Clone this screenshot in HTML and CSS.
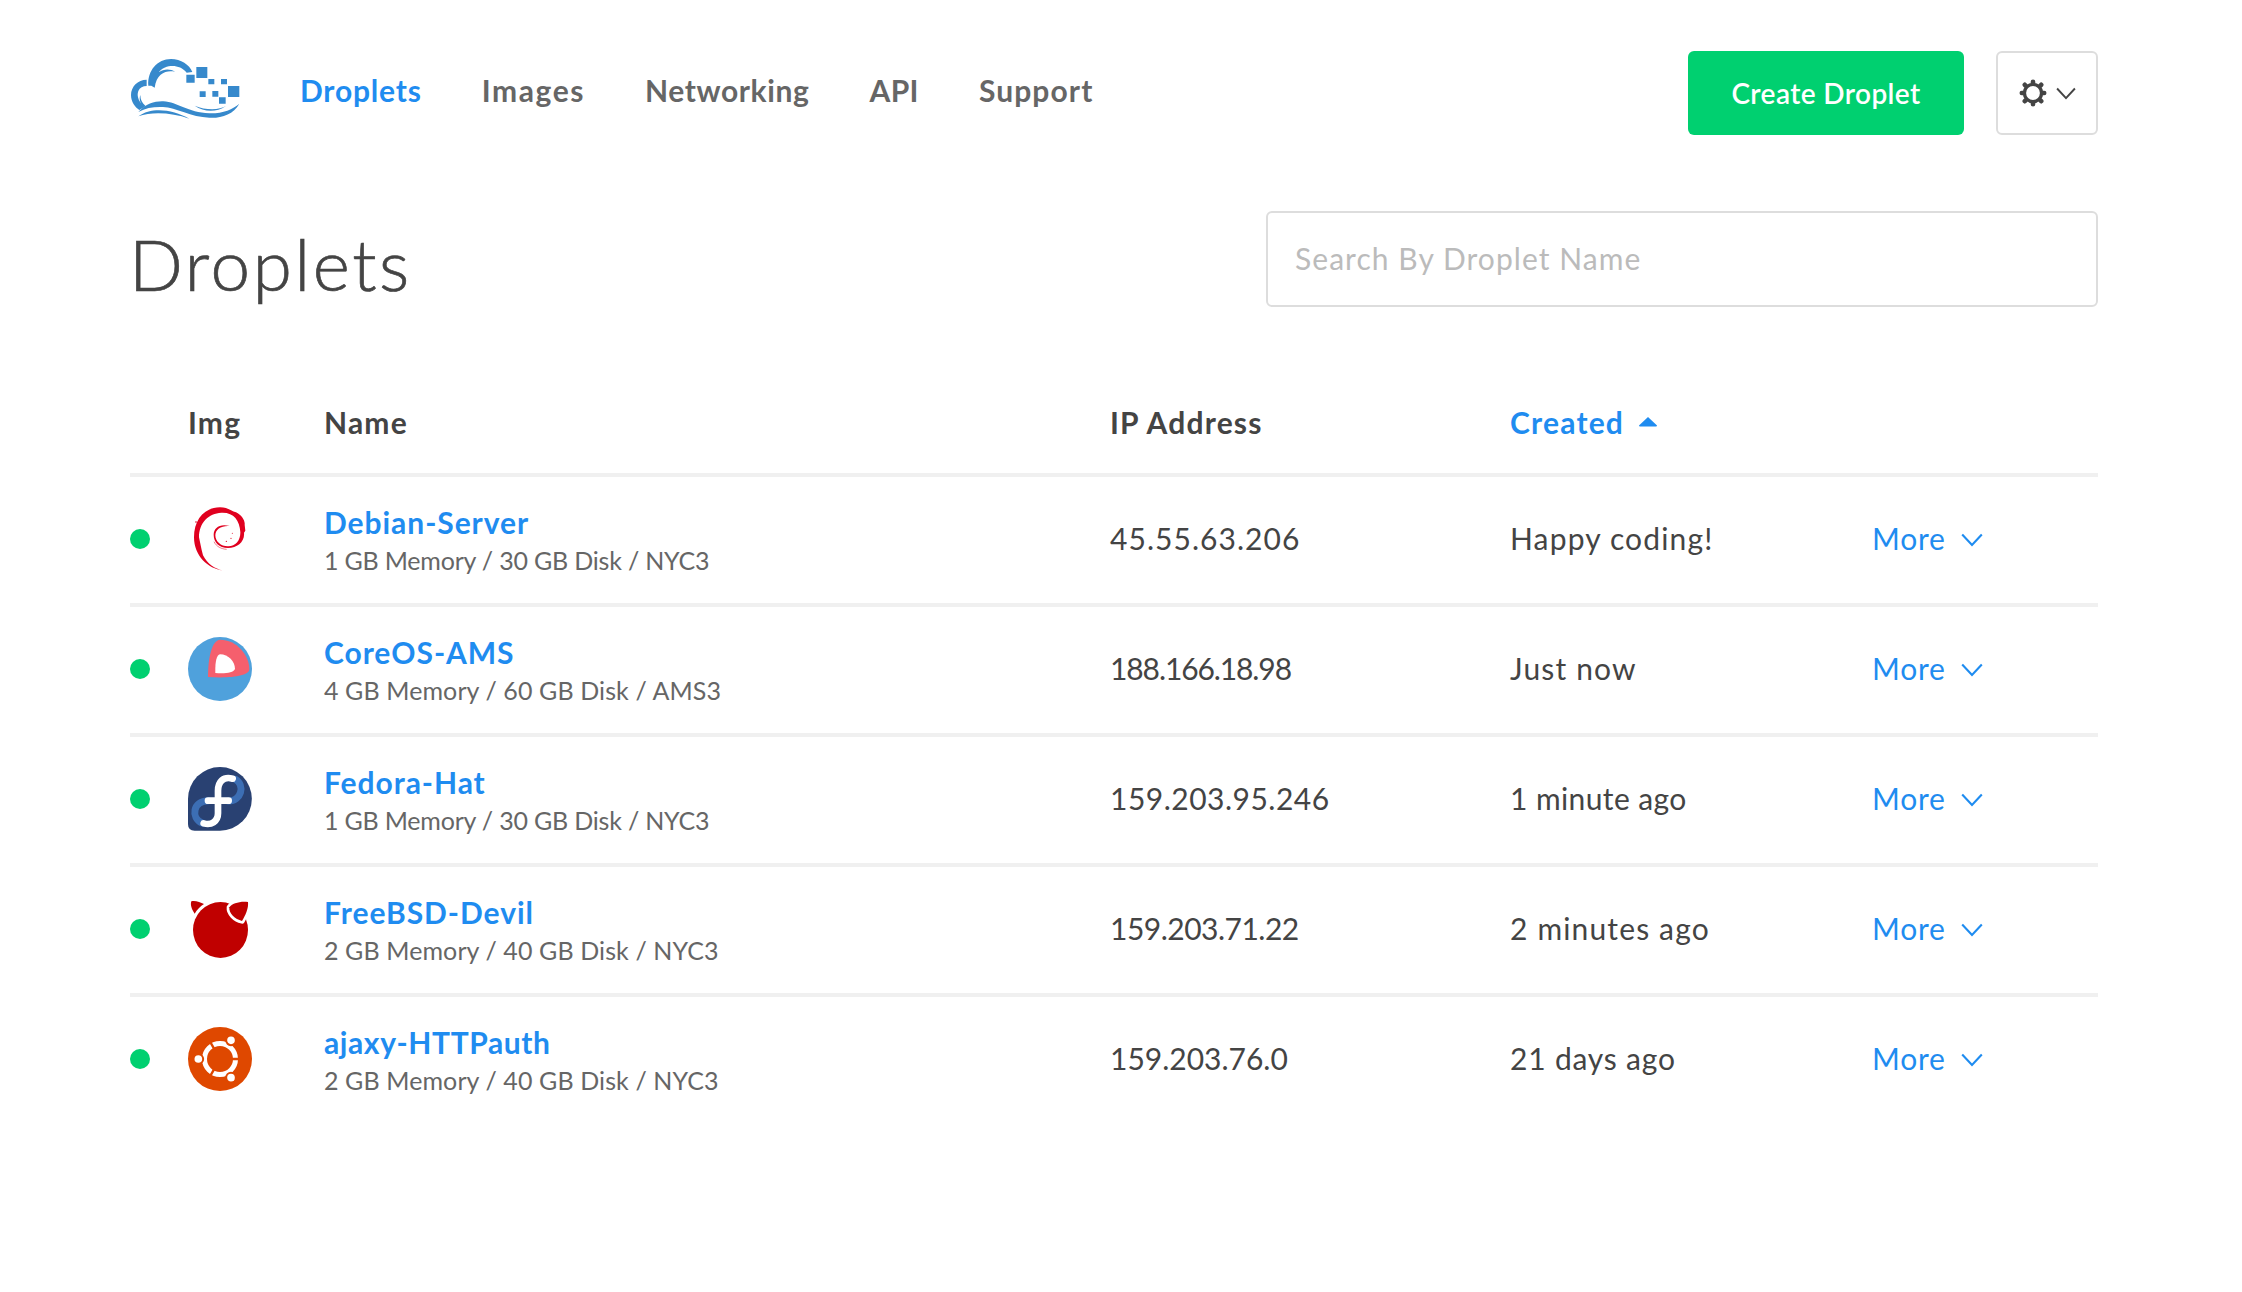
FILE: index.html
```
<!DOCTYPE html>
<html lang="en">
<head>
<meta charset="utf-8">
<title>Droplets</title>
<link rel="stylesheet" href="styles.css">
</head>
<body>
<svg class="sprite" aria-hidden="true">
  <symbol id="chevron" viewBox="0 0 22 14"><path d="M1.2 1.5 11 12 20.8 1.5" fill="none" stroke="currentColor" stroke-width="2.1"/></symbol>
</svg>
<div class="page">
  <header class="topbar">
    <a class="logo" href="#" aria-label="Home">
      <svg viewBox="0 0 360 210" fill="#3689cc">
        <path d="M67 95C64 50 94 15 135 15C165 15 190 32 199 54L182 56C168 38 146 33 128 37C112 41 101 50 99 55C113 44 134 45 147 53C122 48 92 56 86 101L76 95Z"/>
        <path d="M62 77C35 77 15 98 15 123C15 143 27 160 40 168L56 158C39 146 31 126 37 111C41 101 51 96 62 96Z"/>
        <path d="M43 123C38 136 44 152 54 160L58 155C48 147 43 137 43 123Z"/>
        <path d="M37 174C60 148 88 141 112 142C155 144 185 176 250 178C290 179 320 166 340 149C322 182 285 193 250 191C195 190 150 160 111 159C84 158 60 161 37 174Z"/>
        <path d="M37 187C75 158 140 165 190 194C140 177 80 172 37 187Z"/>
        <path d="M206 155C235 175 270 176 300 156C282 168 240 170 206 155Z"/>
        <path d="M181 62h25v24h-25zM211 39h33v33h-33zM247 75h18v16h-18zM285 75h18v16h-18zM306 96h34v33h-34zM221 112h18v17h-18zM259 111h18v17h-18zM279 130h20v19h-20z"/>
      </svg>
    </a>
    <nav class="nav">
      <a class="nav-link active" href="#">Droplets</a>
      <a class="nav-link" href="#">Images</a>
      <a class="nav-link" href="#">Networking</a>
      <a class="nav-link" href="#">API</a>
      <a class="nav-link" href="#">Support</a>
    </nav>
    <div class="actions">
      <button class="create" type="button">Create Droplet</button>
      <button class="settings" type="button" aria-label="Settings">
        <svg class="gear" viewBox="-14 -14 28 28">
          <circle r="8.6" fill="none" stroke="#444" stroke-width="3.4"/>
          <path d="M0-11.2V-9.500M0 11.200V9.500M-11.200 0H-9.500M11.200 0H9.500M-8.200-8.200l1 1M8.200-8.200l-1 1M-8.200 8.200l1-1M8.200 8.200l-1-1" stroke="#444" stroke-width="4.600" stroke-linecap="round"/>
        </svg>
        <svg class="chev-sm"><use href="#chevron"/></svg>
      </button>
    </div>
  </header>

  <div class="heading">
    <h1>Droplets</h1>
    <input class="search" type="text" placeholder="Search By Droplet Name">
  </div>

  <div class="table">
    <div class="row head">
      <span></span><span>Img</span><span>Name</span><span>IP Address</span>
      <span class="sorted">Created <svg class="caret" viewBox="0 0 20 10"><path d="M10 0 19 8.500Q19 9.500 18 9.500H2Q1 9.500 1 8.500Z" fill="currentColor"/></svg></span>
      <span></span>
    </div>

    <div class="row">
      <i class="dot"></i>
      <svg class="os" viewBox="12 21 192 192" fill="#e0001f">
        <path d="M117 212C72 206 30 168 30 112C30 60 60 22 108 22C132 22 142 34 156 37C172 44 184 62 182 74L184 92L180 98C183 125 160 144 132 144C105 144 89 126 89 104C89 83 108 70 137 78C112 76 94 88 94 106C94 125 112 140 133 139C155 139 170 120 169 96C167 60 148 36 112 38C74 40 45 68 45 112L53 150L57 166C70 192 92 206 117 212Z"/>
        <path d="M90 125C97 140 112 147 128 148" fill="none" stroke="#e0001f" stroke-width="1.500"/>
        <circle cx="145" cy="100" r="1.500"/><circle cx="141" cy="115" r="1.800"/><circle cx="127" cy="124" r="2"/><circle cx="36" cy="66" r="2.500"/>
      </svg>
      <div class="who"><a class="name" href="#">Debian-Server</a><span class="spec">1 GB Memory / 30 GB Disk / NYC3</span></div>
      <span class="ip ip-wide">45.55.63.206</span>
      <span class="created">Happy coding!</span>
      <a class="more" href="#">More <svg class="chev"><use href="#chevron"/></svg></a>
    </div>

    <div class="row">
      <i class="dot"></i>
      <svg class="os" viewBox="204 111 192 192">
        <circle cx="300" cy="207" r="96" fill="#4fa1dc"/>
        <path d="M264 231C264 170 276 121 300 119C350 119 388 165 388 208C388 228 330 236 264 231Z" fill="#f55f6d"/>
        <path d="M286 219C285 185 290 165 300 163C325 163 345 185 345 207C340 218 315 222 286 219Z" fill="#fff"/>
      </svg>
      <div class="who"><a class="name" href="#">CoreOS-AMS</a><span class="spec spec-wide">4 GB Memory / 60 GB Disk / AMS3</span></div>
      <span class="ip ip-tight">188.166.18.98</span>
      <span class="created">Just now</span>
      <a class="more" href="#">More <svg class="chev"><use href="#chevron"/></svg></a>
    </div>

    <div class="row">
      <i class="dot"></i>
      <svg class="os" viewBox="204 501 192 192" fill="none" stroke-linecap="round">
        <path d="M300 501A95.500 95.500 0 0 1 300 692H224Q204 692 204 672V597A96 96 0 0 1 300 501Z" fill="#294172"/>
        <path d="M346 538C376 556 364 603 325 603M265 602C218 602 212 654 246 669" stroke="#3c6eb4" stroke-width="21"/>
        <path d="M338 536C309 528 294 546 294 572V640C294 664 274 677 251 670M264 602H326" stroke="#fff" stroke-width="20"/>
      </svg>
      <div class="who"><a class="name" href="#">Fedora-Hat</a><span class="spec">1 GB Memory / 30 GB Disk / NYC3</span></div>
      <span class="ip ip-normal">159.203.95.246</span>
      <span class="created created-tight">1 minute ago</span>
      <a class="more" href="#">More <svg class="chev"><use href="#chevron"/></svg></a>
    </div>

    <div class="row">
      <i class="dot"></i>
      <svg class="os" viewBox="204 111 192 192" fill="#c00000">
        <path d="M214 124C226 121 241 127 252 132C240 140 230 150 224 161C216 149 210 135 214 124Z"/>
        <ellipse cx="301.500" cy="210" rx="82.500" ry="84"/>
        <path d="M328 142C326 160 345 178 366 183C377 165 386 144 384 126C365 122 335 129 328 142Z" stroke="#fff" stroke-width="16" stroke-linejoin="round" paint-order="stroke"/>
      </svg>
      <div class="who"><a class="name" href="#">FreeBSD-Devil</a><span class="spec spec-wide">2 GB Memory / 40 GB Disk / NYC3</span></div>
      <span class="ip ip-snug">159.203.71.22</span>
      <span class="created">2 minutes ago</span>
      <a class="more" href="#">More <svg class="chev"><use href="#chevron"/></svg></a>
    </div>

    <div class="row">
      <i class="dot"></i>
      <svg class="os" viewBox="-96 -96 192 192">
        <circle r="96" fill="#df4800"/>
        <circle r="46.500" fill="none" stroke="#fff" stroke-width="15"/>
        <path d="M30 0H60M-17-29.400-30-52M-17 29.400-30 52" stroke="#df4800" stroke-width="7"/>
        <g fill="#fff" stroke="#df4800" stroke-width="6"><circle cx="-65" r="14.500"/><circle cx="33" cy="-56" r="14.500"/><circle cx="33" cy="56" r="14.500"/></g>
      </svg>
      <div class="who"><a class="name name-tight" href="#">ajaxy-HTTPauth</a><span class="spec spec-wide">2 GB Memory / 40 GB Disk / NYC3</span></div>
      <span class="ip ip-even">159.203.76.0</span>
      <span class="created created-snug">21 days ago</span>
      <a class="more" href="#">More <svg class="chev"><use href="#chevron"/></svg></a>
    </div>
  </div>
</div>
</body>
</html>
```
FILE: styles.css
```
* { box-sizing: border-box; }
body { margin: 0; background: #fff; color: #444; font: 400 30px/40px Lato, sans-serif; }
a { color: #1f8cf0; text-decoration: none; }
button, input { font: inherit; }
.sprite { display: block; width: 0; height: 0; }
.page { width: 1968px; margin: 0 0 0 130px; padding-top: 51px; }

.topbar { display: flex; align-items: flex-start; height: 84px; }
.logo { width: 120px; height: 70px; margin: 3px 0 0 -4px; }
.logo svg { display: block; width: 120px; height: 70px; }
.nav { display: flex; gap: 60px; margin: 19px 0 0 54px; }
.nav-link { color: #666; font-weight: 700; letter-spacing: .8px; }
.nav-link.active { color: #1f8cf0; }
.nav-link:nth-child(2) { letter-spacing: 1.6px; }
.nav-link:nth-child(3) { letter-spacing: .6px; }
.nav-link:nth-child(4) { letter-spacing: .4px; }
.nav-link:nth-child(5) { letter-spacing: 1.1px; }
.actions { display: flex; gap: 32px; margin-left: auto; }
.create { width: 276px; height: 84px; padding: 0; border: 0; border-radius: 6px; background: #00d070; color: #fff; font-size: 28px; font-weight: 600; letter-spacing: .4px; }
.settings { display: flex; align-items: center; justify-content: center; gap: 9px; width: 102px; height: 84px; padding: 0 0 0 1px; border: 2px solid #ddd; border-radius: 6px; background: #fff; color: #444; }
.gear { width: 28px; height: 28px; }
.chev-sm { width: 20px; height: 13px; }

.heading { display: flex; justify-content: space-between; align-items: flex-start; height: 96px; margin-top: 76px; }
h1 { margin: 13px 0 0 -1px; font-size: 71px; line-height: 80px; font-weight: 300; letter-spacing: 2.6px; -webkit-text-stroke: .7px #444; }
.search { width: 832px; height: 96px; padding: 0 27px 2px; border: 2px solid #ddd; border-radius: 6px; background: #fff; color: #444; letter-spacing: 1.05px; outline: 0; }
.search::placeholder { color: #bbb; opacity: 1; }

.table { margin-top: 92px; }
.row { display: grid; grid-template-columns: 58px 136px 786px 400px 362px 1fr; align-items: center; height: 130px; padding-bottom: 2px; border-top: 4px solid #f0f0f0; }
.row.head { height: 74px; align-items: start; padding-top: 3px; border-top: 0; font-weight: 700; letter-spacing: 1.2px; }
.sorted { display: flex; align-items: center; gap: 14px; color: #1f8cf0; }
.caret { width: 20px; height: 10px; }
.dot { width: 20px; height: 20px; border-radius: 50%; background: #00d070; }
.os { width: 64px; height: 64px; }
.who { display: flex; flex-direction: column; padding-top: 1px; }
.name { font-weight: 700; letter-spacing: .95px; }
.name-tight { letter-spacing: .6px; }
.spec { color: #666; font-size: 25px; line-height: 36px; letter-spacing: -.2px; }
.spec-wide { letter-spacing: .1px; }
.ip, .created, .more { padding-bottom: 3px; }
.ip-wide { letter-spacing: 1.05px; }
.ip-normal { letter-spacing: .5px; }
.ip-even { letter-spacing: 0; }
.ip-snug { letter-spacing: -.5px; }
.ip-tight { letter-spacing: -1.1px; }
.created { letter-spacing: 1.15px; }
.created-snug { letter-spacing: .8px; }
.created-tight { letter-spacing: .4px; }
.more { display: flex; align-items: center; gap: 15px; letter-spacing: .8px; }
.chev { width: 22px; height: 14px; margin-top: 5px; }
```
